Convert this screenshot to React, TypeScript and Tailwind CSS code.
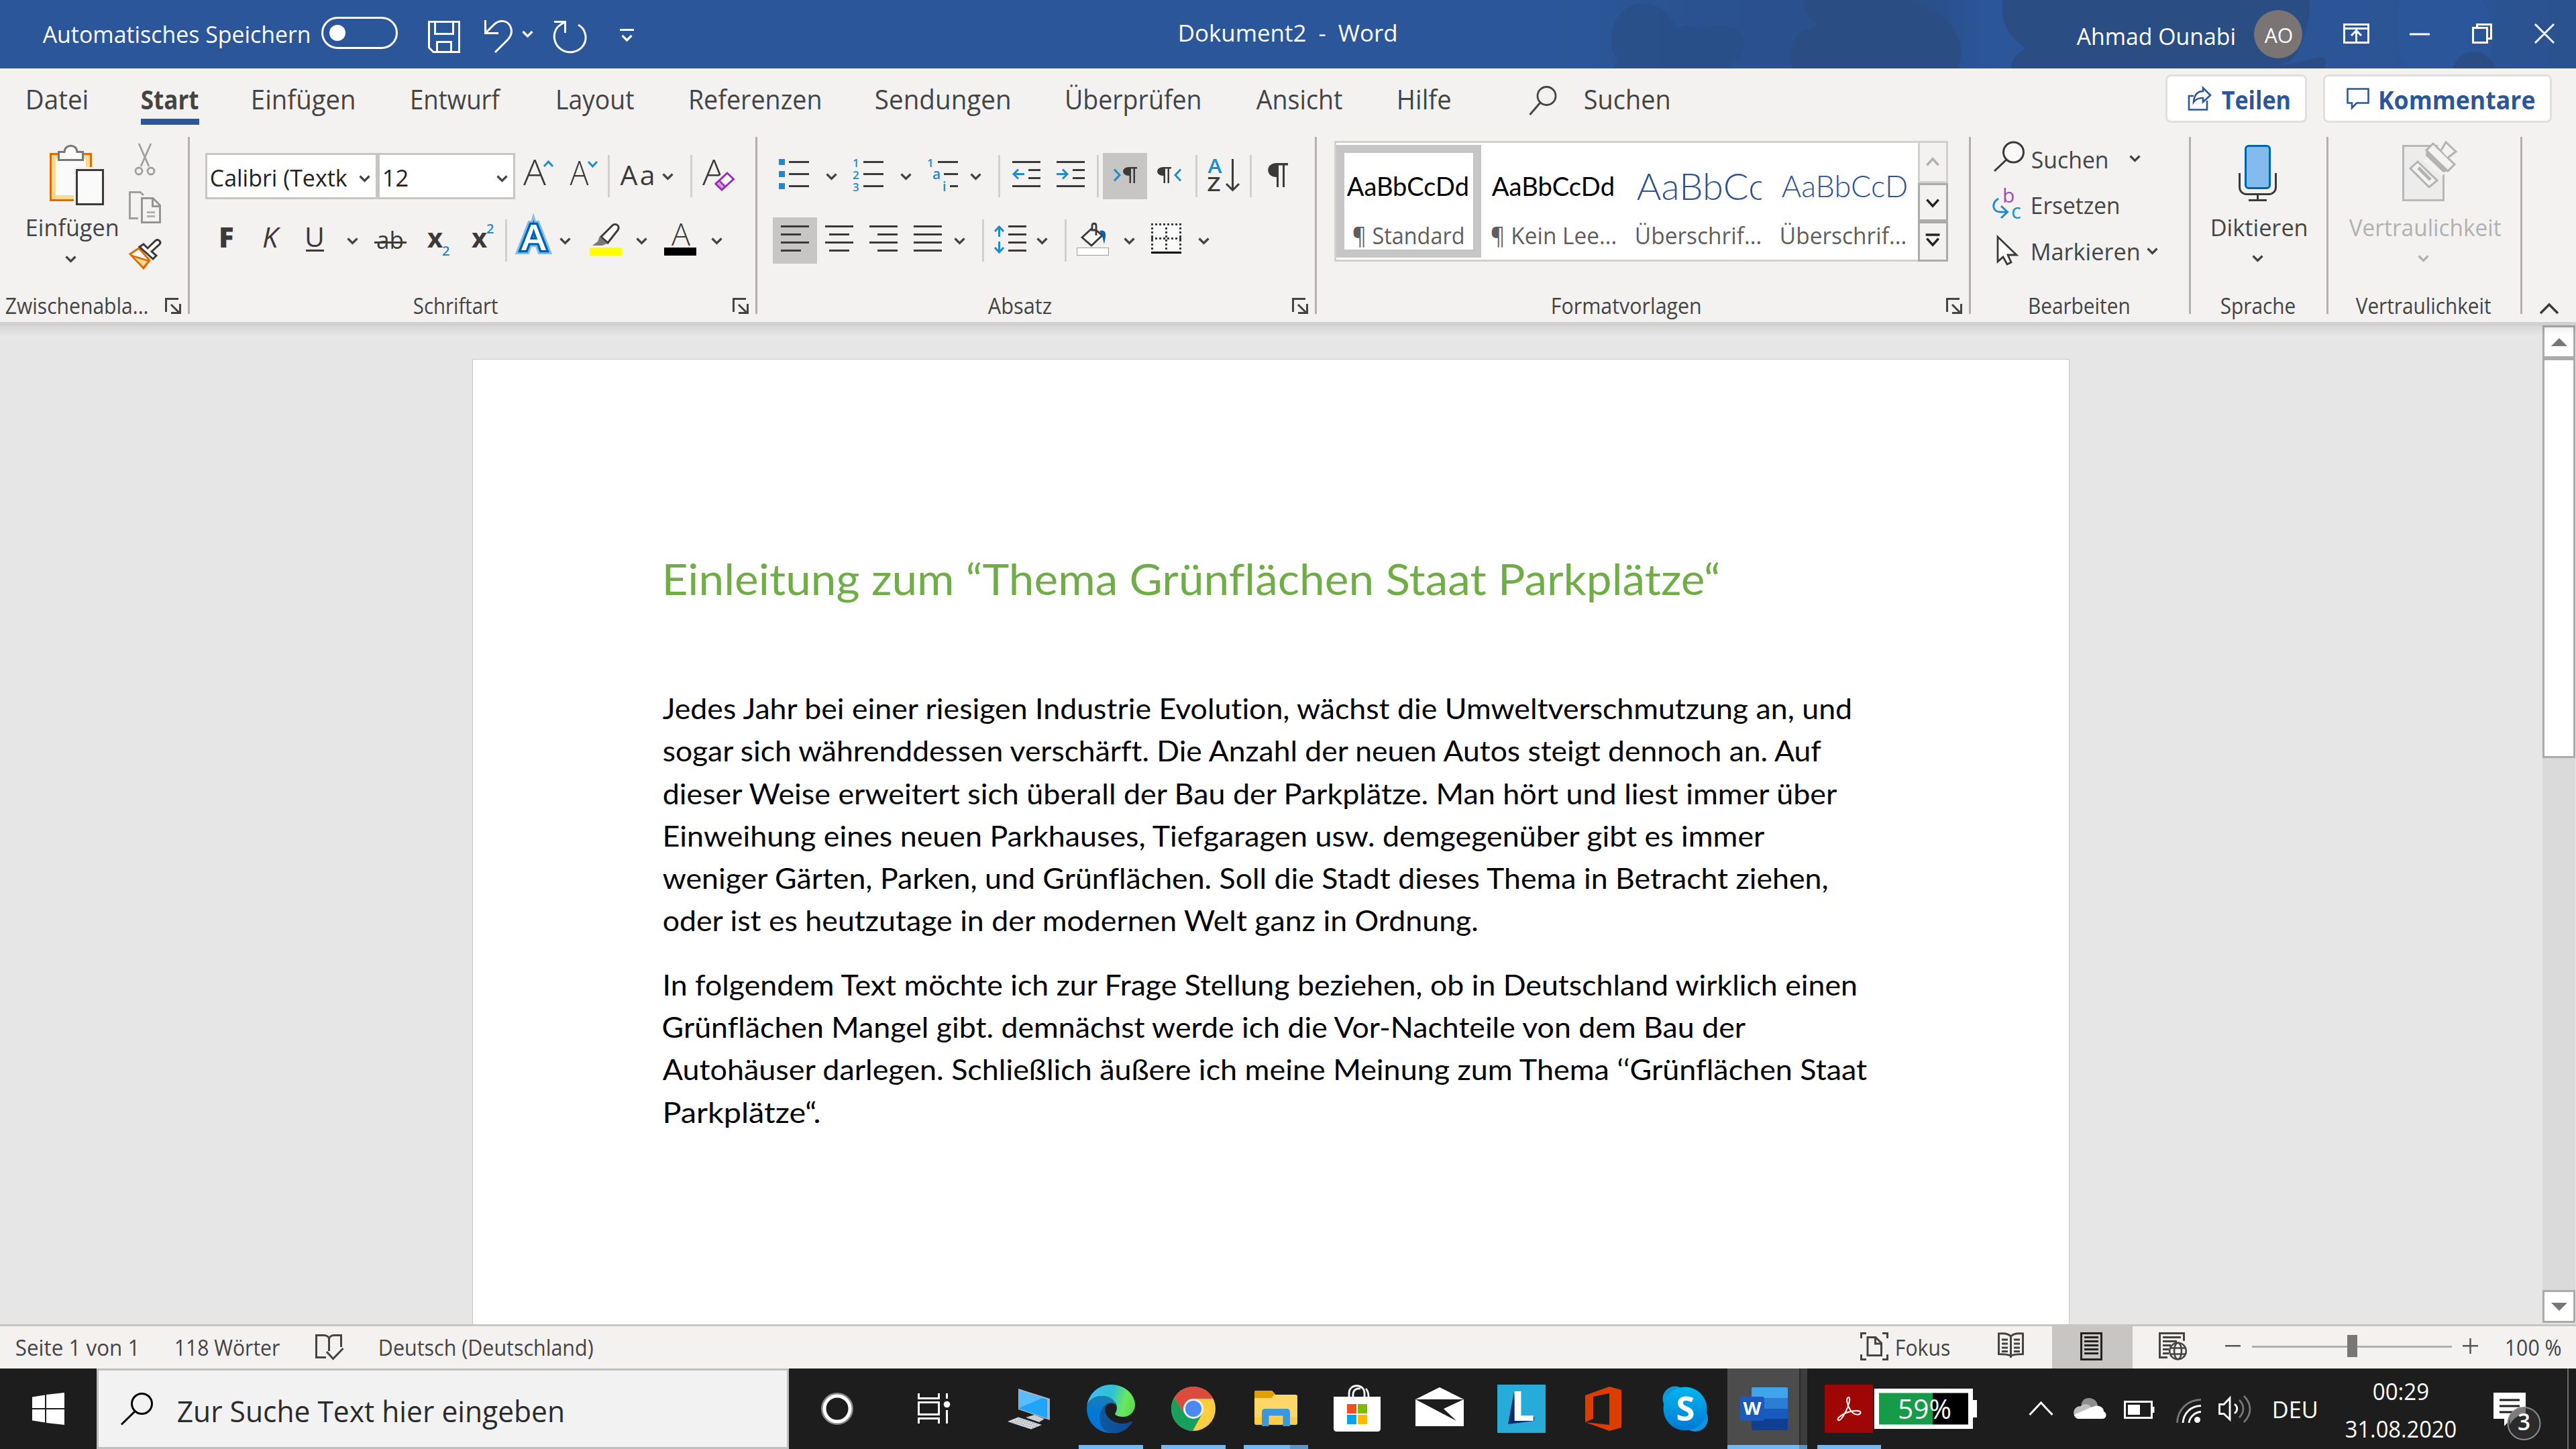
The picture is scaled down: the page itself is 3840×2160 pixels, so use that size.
import { useLayoutEffect, useRef, type ReactNode } from "react";

const INK = "#3b3a39";
const BLUE = "#1e8bcd";

/** Single line of text whose ink is condensed or widened to fill the width of its box. */
function Fit({ className = "", children }: { className?: string; children: string }) {
  const ref = useRef<HTMLSpanElement>(null);
  useLayoutEffect(() => {
    const el = ref.current;
    const box = el?.parentElement;
    const ctx = document.createElement("canvas").getContext("2d");
    if (!el || !box || !ctx) return;
    const cs = getComputedStyle(el);
    ctx.font = `${cs.fontStyle} ${cs.fontWeight} ${cs.fontSize} ${cs.fontFamily}`;
    // The same minimal tracking as the element, which keeps ligatures off in both.
    (ctx as CanvasRenderingContext2D & { letterSpacing: string }).letterSpacing = "0.01px";
    const m = ctx.measureText(children);
    const k = (box.clientWidth - 0.5) / (m.actualBoundingBoxLeft + m.actualBoundingBoxRight);
    el.style.transform = `translate(${m.actualBoundingBoxLeft * k + 0.7}px, 1px) scaleX(${k})`;
  }, [children]);
  return (
    <div className={`shrink-0 ${className}`}>
      <span ref={ref} className="block w-max origin-left tracking-[0.01px] whitespace-pre">
        {children}
      </span>
    </div>
  );
}

/** Icon canvas: draws the window region that starts at (x, y). */
function Ico({ x, y, w, h, children, className = "" }: { x: number; y: number; w: number; h: number; children?: ReactNode; className?: string }) {
  return (
    <svg className={`block shrink-0 ${className}`} width={w} height={h} viewBox={`${x} ${y} ${w} ${h}`} fill="none">
      {children}
    </svg>
  );
}

function V({ x, y, c = "#444", w = 3.2 }: { x: number; y: number; c?: string; w?: number }) {
  return <path d={`M${x + 1.5} ${y + 1.5}l7 7l7 -7`} stroke={c} strokeWidth={w} />;
}

function Lines({ rows, c = INK }: { rows: [number, number, number][]; c?: string }) {
  return (
    <>
      {rows.map(([a, b, y], i) => (
        <rect key={i} x={a} y={y} width={b - a} height={3} fill={c} />
      ))}
    </>
  );
}

function Launcher({ x }: { x: number }) {
  return (
    <Ico x={x} y={435} w={24} h={40}>
      <path d={`M${x + 1.5} 465V445.5H${x + 20}M${x + 9} 454l12 12M${x + 22.5} 453V466.5H${x + 9}`} stroke="#444" strokeWidth={3} />
    </Ico>
  );
}

const Sep = () => <div className="h-[264px] w-[3px] shrink-0 bg-[#b3b0ad]" />;
const Tick = () => <div className="mt-[27px] h-[63px] w-[3px] shrink-0 bg-[#d2d0ce]" />;
const Tick2 = () => <div className="mt-[15px] h-[63px] w-[3px] shrink-0 bg-[#d2d0ce]" />;

function TitleBar() {
  return (
    <header className="relative flex h-[102px] w-full shrink-0 items-start bg-[#2b579a] text-white">
      <div className="absolute inset-y-0 right-0">
        <Ico x={2300} y={0} w={1540} h={102}>
          <defs>
            <linearGradient id="tb" x1="0" x2="1" y1="0" y2="0">
              <stop offset="0" stopColor="#2a5391" stopOpacity="0" />
              <stop offset="0.15" stopColor="#2a5290" />
              <stop offset="0.38" stopColor="#2a508b" />
              <stop offset="0.43" stopColor="#2b569a" />
              <stop offset="0.8" stopColor="#2b5596" />
              <stop offset="1" stopColor="#2a528f" />
            </linearGradient>
          </defs>
          <rect x={2300} y={0} width={1540} height={102} fill="url(#tb)" />
          <g fill="#2a4e84">
            <path d="M2405 102C2408 96 2412 93 2412 90C2400 82 2398 40 2412 25C2425 5 2455 -3 2478 15C2494 28 2498 35 2500 42C2514 35 2525 38 2535 45C2560 33 2590 38 2598 55C2606 78 2590 90 2575 102Z" opacity=".7" />
            <path d="M2672 102C2664 60 2680 45 2710 38C2690 20 2686 8 2690 0H2850C2890 12 2915 40 2922 65C2926 80 2922 95 2918 102Z" />
            <path d="M2986 0H3443C3444 40 3430 75 3415 90L3390 102H2998C2996 92 3004 82 3020 72C2988 50 2982 25 2986 0Z" />
            <path d="M3370 102C3405 98 3440 90 3458 85C3470 84 3468 96 3464 102Z" />
            <path d="M3657 102C3660 85 3674 77 3688 77C3704 77 3716 88 3719 102Z" />
          </g>
          <path d="M3580 0C3565 40 3574 80 3590 102H3657C3662 84 3674 77 3688 77C3700 77 3706 82 3710 87C3720 60 3714 20 3700 0Z" fill="#2b579a" />
        </Ico>
      </div>
      <div className="relative flex">
        <Fit className="ml-[63px] w-[398px] text-[35px] leading-[100px]">Automatisches Speichern</Fit>
        <div className="mt-[25px] ml-[18px] flex h-[48px] w-[114px] items-center rounded-full border-3 border-white pl-[9px]">
          <div className="size-6 rounded-full bg-white" />
        </div>
        <Ico x={593} y={0} w={352} h={102}>
          <g stroke="#fff" strokeWidth={3}>
            <path d="M639.5 32.5H684.5V77.5H646L639.5 71ZM648.5 32.5V50.5H675.5V32.5M651.5 77.5V62.5H672.5V77.5" />
            <path d="M723.5 30V49.5H743M724 49L737 36C745 29 757 30 761 40C765 49 761 55 756 60L738 78" />
            <path d="M862 37C873 43 876 57 870 67C863 78 848 81 837 74C826 67 823 52 830 42C833 38 836 36 842 33M826 32.5H842.5V49" />
            <path d="M924 44.5H945" />
            <path d="M779.5 47l7 7l7 -7M927.5 53l7 7l7 -7" strokeWidth={3.2} />
          </g>
        </Ico>
        <Fit className="ml-[813px] w-[323px] text-[35px] leading-[95px]">{"Dokument2  -  Word"}</Fit>
        <Fit className="ml-[1014px] w-[236px] text-[35px] leading-[105px]">Ahmad Ounabi</Fit>
        <div className="mt-[15px] ml-[29px] flex size-[72px] rounded-full bg-[#7a7574]">
          <Fit className="ml-[15px] w-[42px] text-[31px] leading-[73px]">AO</Fit>
        </div>
        <Ico x={3432} y={0} w={408} h={102}>
          <path d="M3494.5 36.5H3530.5V63.5H3494.5ZM3494 42.5H3531M3512.5 63V46M3505 53l7.5 -7.5l7.5 7.5M3592 51H3622M3686.5 41.5H3707.5V63.5H3686.5ZM3692.5 41V36.5H3713.5V57.5H3708M3779 36l28 28M3807 36l-28 28" stroke="#fff" strokeWidth={3} />
        </Ico>
      </div>
    </header>
  );
}

function Tabs() {
  const t = "text-[40px] leading-[89px]";
  return (
    <nav className="flex h-[102px] shrink-0 items-start text-[#444]">
      <Fit className={`ml-[40px] w-[90px] ${t}`}>Datei</Fit>
      <div className="ml-[80px] w-[87px] shrink-0">
        <Fit className={`h-[75px] w-[86px] font-bold ${t}`}>Start</Fit>
        <div className="h-[9px] bg-[#2b579a]" />
      </div>
      <Fit className={`ml-[79px] w-[152px] ${t}`}>Einfügen</Fit>
      <Fit className={`ml-[85px] w-[134px] ${t}`}>Entwurf</Fit>
      <Fit className={`ml-[83px] w-[115px] ${t}`}>Layout</Fit>
      <Fit className={`ml-[83px] w-[195px] ${t}`}>Referenzen</Fit>
      <Fit className={`ml-[82px] w-[200px] ${t}`}>Sendungen</Fit>
      <Fit className={`ml-[84px] w-[200px] ${t}`}>Überprüfen</Fit>
      <Fit className={`ml-[83px] w-[129px] ${t}`}>Ansicht</Fit>
      <Fit className={`ml-[83px] w-[78px] ${t}`}>Hilfe</Fit>
      <Ico x={2162} y={102} w={200} h={102}>
        <circle cx={2305.5} cy={143} r={13.5} stroke="#444" strokeWidth={2.8} />
        <path d="M2296 153L2280.5 171" stroke="#444" strokeWidth={3} />
      </Ico>
      <Fit className={`w-[126px] ${t}`}>Suchen</Fit>
      <div className="mt-[9px] ml-[740px] flex h-[72px] w-[211px] shrink-0 rounded-lg border-3 border-[#e1dfdd] bg-white text-[#2b579a]">
        <Ico x={3231} y={114} w={80} h={66}>
          <path d="M3270 143H3263V163.5H3290V150M3270 152C3271 140 3277 136 3284 136V131L3295 142L3284 152V146C3277 146 3273 148 3270 152Z" stroke="#2b579a" strokeWidth={2.6} />
        </Ico>
        <Fit className="w-[102px] text-[38px] leading-[67px] font-bold">Teilen</Fit>
      </div>
      <div className="mt-[9px] ml-[24px] flex h-[72px] w-[341px] shrink-0 rounded-lg border-3 border-[#e1dfdd] bg-white text-[#2b579a]">
        <Ico x={3466} y={114} w={81} h={66}>
          <path d="M3499.5 132.5H3530.5V153.5H3513L3506 161V153.5H3499.5Z" stroke="#2b579a" strokeWidth={2.6} />
        </Ico>
        <Fit className="w-[231px] text-[38px] leading-[67px] font-bold">Kommentare</Fit>
      </div>
    </nav>
  );
}

function Clipboard() {
  return (
    <section className="w-[280px] shrink-0">
      <div className="flex h-[231px]">
        <div className="ml-[40px] w-[137px]">
          <Ico x={40} y={204} w={137} h={108}>
            <rect x={75.5} y={229.5} width={60} height={69} fill="#f8da90" stroke="#e06c00" strokeWidth={3} />
            <rect x={83} y={237} width={45} height={54} fill="#fafafa" />
            <path d="M87.5 226.5H96C97 214 114 214 115 226.5H123.5V238.5H87.5Z" fill="#fafafa" stroke="#797775" strokeWidth={3} />
            <rect x={110} y={249} width={50} height={60} fill="#f3f2f1" />
            <rect x={114.5} y={253.5} width={39} height={51} fill="#fafafa" stroke={INK} strokeWidth={3} />
          </Ico>
          <Fit className="h-[51px] w-[135px] text-[35px] leading-[51px]">Einfügen</Fit>
          <Ico x={40} y={363} w={135} h={40}>
            <V x={97} y={381} />
          </Ico>
        </div>
        <div className="ml-[9px]">
          <Ico x={186} y={204} w={60} h={69}>
            <g stroke="#a19f9d" strokeWidth={2.8}>
              <path d="M207 214L222 248M225 214L210 248" />
              <circle cx={207} cy={255} r={5} />
              <circle cx={225} cy={255} r={5} />
            </g>
          </Ico>
          <Ico x={186} y={273} w={60} h={72}>
            <path d="M206 325.5H193.5V286.5H209L214 291" stroke="#a19f9d" strokeWidth={3} />
            <path d="M211.5 295.5H228L238.5 306V331.5H211.5Z M227.5 296V307.5H238" stroke="#979593" strokeWidth={3} />
            <path d="M219 316.5h12M219 322.5h12" stroke="#b3b0ad" strokeWidth={3} />
          </Ico>
          <Ico x={186} y={345} w={60} h={80}>
            <path d="M207 370L194 378.5L214 400L223 388Z" fill="#fff" stroke="#e06c00" strokeWidth={3} />
            <path d="M196 381L222 389L213.5 399Z" fill="#f8da90" stroke="#e06c00" strokeWidth={2.5} />
            <path d="M208 368L214 364L220 370L232 358.5C236 356 241 360 238 364L226 375L233 381L228 386Z" fill="#fff" stroke={INK} strokeWidth={3} />
          </Ico>
        </div>
      </div>
      <div className="flex">
        <Fit className="ml-[8px] w-[212px] text-[32px] leading-[39px]">Zwischenabla...</Fit>
        <div className="w-[26px]" />
        <Launcher x={246} />
      </div>
    </section>
  );
}

function FontGroup() {
  return (
    <section className="w-[843px] shrink-0">
      <div className="flex h-[108px] items-start">
        <div className="mt-[24px] ml-[23px] flex h-[69px] w-[462px] shrink-0 border-3 border-[#c8c6c4] bg-white text-[#222]">
          <Fit className="ml-[5px] w-[204px] text-[35px] leading-[65px]">Calibri (Textk</Fit>
          <Ico x={518} y={231} w={42} h={63}>
            <V x={535} y={261} />
          </Ico>
          <div className="w-[6px] bg-[#c8c6c4]" />
          <Fit className="ml-[6px] w-[36px] text-[35px] leading-[65px]">12</Fit>
          <Ico x={608} y={231} w={157} h={63}>
            <V x={740} y={261} />
          </Ico>
        </div>
        <Ico x={768} y={204} w={138} h={108} className="font-['Open_Sans',sans-serif]">
          <g fill={INK}>
            <text x={780} y={276} fontSize={54} fontWeight={350} textLength={34} lengthAdjust="spacingAndGlyphs">A</text>
            <text x={849.5} y={276} fontSize={50} fontWeight={350} textLength={28} lengthAdjust="spacingAndGlyphs">A</text>
          </g>
          <path d="M811 248l6.5 -7l6.5 7M877 241l6.5 7l6.5 -7" stroke={BLUE} strokeWidth={3} />
        </Ico>
        <Tick />
        <Ico x={909} y={204} w={120} h={108} className="font-['Open_Sans',sans-serif]">
          <text x={924.5} y={276} fontSize={41} fill={INK} textLength={52} lengthAdjust="spacing">Aa</text>
          <V x={987} y={258} />
        </Ico>
        <Tick />
        <Ico x={1032} y={204} w={94} h={108} className="font-['Open_Sans',sans-serif]">
          <text x={1047} y={276} fontSize={54} fontWeight={350} fill={INK} textLength={34} lengthAdjust="spacingAndGlyphs">A</text>
          <path d="M1082 257L1095 269L1077 285L1064 273Z" fill="#f3f2f1" stroke="#f3f2f1" strokeWidth={5} />
          <path d="M1084 258L1093.5 267L1076 283L1067 274Z" fill="#fff" stroke="#9b2fae" strokeWidth={3} />
          <path d="M1067 274L1072 269L1081 278L1076 283Z" fill="#d59ddf" stroke="#9b2fae" strokeWidth={2.5} />
        </Ico>
      </div>
      <div className="flex h-[123px] items-start">
        <Ico x={283} y={312} w={470} h={123} className="font-['Open_Sans',sans-serif]">
          <g fill={INK}>
            <text x={326} y={369} fontSize={42} fontWeight={800}>F</text>
            <text x={391} y={369} fontSize={42} fontStyle="italic">K</text>
            <text x={454} y={368} fontSize={41}>U</text>
            <rect x={456} y={372} width={27} height={3} />
            <text x={561} y={371} fontSize={37} textLength={41} lengthAdjust="spacingAndGlyphs">ab</text>
            <rect x={558} y={360} width={48} height={3} />
            <text x={637} y={369} fontSize={40} fontWeight={700}>x</text>
            <text x={703} y={369} fontSize={40} fontWeight={700}>x</text>
          </g>
          <g fill={BLUE}>
            <text x={659} y={381} fontSize={20} fontWeight={600}>2</text>
            <text x={725} y={348} fontSize={20} fontWeight={600}>2</text>
          </g>
          <V x={517} y={354} />
        </Ico>
        <Tick2 />
        <Ico x={756} y={312} w={370} h={123} className="font-['Open_Sans',sans-serif]">
          <g fontSize={52} fontWeight={600}>
            <text x={777} y={373} stroke="#83bbec" strokeWidth={12} textLength={37} lengthAdjust="spacingAndGlyphs">A</text>
            <text x={777} y={373} stroke="#0063b1" strokeWidth={6.5} textLength={37} lengthAdjust="spacingAndGlyphs">A</text>
            <text x={777} y={373} fill="#fff" textLength={37} lengthAdjust="spacingAndGlyphs">A</text>
          </g>
          <V x={834} y={354} />
          <path d="M896 353L913 336C917 332 925 336 921 343L906 362L896 353Z" fill="#fafafa" stroke={INK} strokeWidth={3} />
          <path d="M894 352L905 363L898 366H883L891 360Z" fill="#797775" />
          <rect x={879} y={369} width={48} height={12} fill="#ff0" />
          <V x={948} y={354} />
          <text x={1001} y={366} fontSize={46} fontWeight={350} fill={INK} textLength={28} lengthAdjust="spacingAndGlyphs">A</text>
          <rect x={990} y={369} width={48} height={12} fill="#000" />
          <V x={1060} y={354} />
        </Ico>
      </div>
      <div className="flex">
        <Fit className="ml-[333px] w-[126px] text-[32px] leading-[39px]">Schriftart</Fit>
        <div className="w-[350px]" />
        <Launcher x={1092} />
      </div>
    </section>
  );
}

function Paragraph() {
  return (
    <section className="w-[831px] shrink-0">
      <div className="flex h-[108px] items-start">
        <Ico x={1129} y={204} w={359} h={108} className="font-['Open_Sans',sans-serif]">
          <path d="M1161 237h9v9h-9zM1161 255h9v9h-9zM1161 273h9v9h-9z" fill={BLUE} />
          <Lines rows={[[1176, 1206, 240], [1176, 1206, 258], [1176, 1206, 276], [1287, 1317, 240], [1287, 1317, 258], [1287, 1317, 276], [1398, 1428, 240], [1407, 1428, 258], [1416, 1428, 276]]} />
          <g fill={BLUE} fontWeight={600} fontSize={17}>
            <text x={1271} y={249}>1</text>
            <text x={1271} y={267}>2</text>
            <text x={1271} y={285}>3</text>
            <text x={1382} y={249}>1</text>
            <text x={1390} y={267} fontSize={21}>a</text>
            <text x={1405} y={285} fontSize={20}>i</text>
          </g>
          <V x={1231} y={258} />
          <V x={1342} y={258} />
          <V x={1446} y={258} />
        </Ico>
        <Tick />
        <Ico x={1491} y={204} w={144} h={108}>
          <Lines rows={[[1509, 1551, 240], [1533, 1551, 252], [1533, 1551, 264], [1509, 1551, 276], [1575, 1617, 240], [1599, 1617, 252], [1599, 1617, 264], [1575, 1617, 276]]} />
          <path d="M1527 259.5H1511M1518 252.5L1511 259.5L1518 266.5M1575 259.5H1591M1584 252.5L1591 259.5L1584 266.5" stroke={BLUE} strokeWidth={3} />
        </Ico>
        <Tick />
        <div className="mt-[24px] ml-[6px] h-[69px] w-[66px] bg-[#c8c6c4]">
          <Ico x={1644} y={228} w={66} h={69}>
            <path d="M1661 252.5L1669 261L1661 269.5" stroke={BLUE} strokeWidth={3} />
            <path d="M1695 249V251.5H1692V273H1689.5V251.5H1686V273H1683.5V262C1671 262 1671 249 1683.5 249Z" fill={INK} />
          </Ico>
        </div>
        <Ico x={1710} y={204} w={72} h={108}>
          <path d="M1760 252.5L1752 261L1760 269.5" stroke={BLUE} strokeWidth={3} />
          <path d="M1746 249V251.5H1743V273H1740.5V251.5H1737V273H1734.5V262C1722 262 1722 249 1734.5 249Z" fill={INK} />
        </Ico>
        <Tick />
        <Ico x={1785} y={204} w={78} h={108} className="font-['Open_Sans',sans-serif]">
          <text x={1800.5} y={258} fontSize={29} fill={BLUE} fontWeight={600} textLength={21} lengthAdjust="spacingAndGlyphs">A</text>
          <text x={1799.5} y={285} fontSize={29} fill={INK} fontWeight={600} textLength={20} lengthAdjust="spacingAndGlyphs">Z</text>
          <path d="M1837.5 237V283M1828 274L1837.5 283.5L1847 274" stroke={INK} strokeWidth={3} />
        </Ico>
        <Tick />
        <Ico x={1866} y={204} w={94} h={108}>
          <path d="M1920 243V246.5H1915V279H1912V246.5H1906V279H1903V264C1886 264 1886 243 1903 243Z" fill={INK} />
        </Ico>
      </div>
      <div className="flex h-[123px] items-start">
        <div className="mt-[12px] ml-[23px] h-[69px] w-[66px] shrink-0 bg-[#c8c6c4]">
          <Ico x={1152} y={324} w={66} h={69}>
            <Lines rows={[[1164, 1206, 336], [1164, 1194, 348], [1164, 1206, 360], [1164, 1194, 372]]} />
          </Ico>
        </div>
        <Ico x={1218} y={312} w={246} h={123}>
          <Lines
            rows={[
              [1230, 1272, 336], [1236, 1266, 348], [1230, 1272, 360], [1236, 1266, 372],
              [1296, 1338, 336], [1308, 1338, 348], [1296, 1338, 360], [1308, 1338, 372],
              [1362, 1404, 336], [1362, 1404, 348], [1362, 1404, 360], [1362, 1404, 372],
            ]}
          />
          <V x={1422} y={354} />
        </Ico>
        <Tick2 />
        <Ico x={1467} y={312} w={120} h={123}>
          <Lines rows={[[1503, 1530, 336], [1503, 1530, 348], [1503, 1530, 360], [1503, 1530, 372]]} />
          <path d="M1489.5 353V338M1483 345L1489.5 338L1496 345M1489.5 360V376M1483 369L1489.5 376L1496 369" stroke={BLUE} strokeWidth={3} />
          <V x={1545} y={354} />
        </Ico>
        <Tick2 />
        <Ico x={1590} y={312} w={370} h={123}>
          <path d="M1627 341L1613 354L1627 366L1643 351L1634 343V337C1634 332 1628 332 1628 337V343L1634 343V351" fill="#fafafa" stroke={INK} strokeWidth={2.8} />
          <path d="M1639 344C1646 342 1649 346 1648 353L1646 364L1643 352Z" fill="#0063b1" />
          <rect x={1605.5} y={369.5} width={47} height={11} fill="#fff" stroke="#a19f9d" />
          <V x={1675} y={354} />
          <rect x={1717} y={334} width={43} height={43} fill="#fafafa" />
          <path d="M1716 334.5H1761M1716 355.5H1761" stroke={INK} strokeWidth={3} strokeDasharray="3 3" />
          <path d="M1717.5 333V372M1738.5 339V372M1759.5 333V372" stroke={INK} strokeWidth={3} strokeDasharray="3 3" />
          <rect x={1716} y={375} width={45} height={3} fill="#000" />
          <V x={1786} y={354} />
        </Ico>
      </div>
      <div className="flex">
        <Fit className="ml-[343px] w-[95px] text-[32px] leading-[39px]">Absatz</Fit>
        <div className="w-[359px]" />
        <Launcher x={1926} />
      </div>
    </section>
  );
}

function Styles() {
  const label = "w-[185px] ml-[15px] text-[35px] leading-[51px] text-[#605e5c] h-[60px]";
  return (
    <section className="w-[972px] shrink-0">
      <div className="h-[231px] pt-[6px]">
        <div className="ml-[26px] flex h-[180px] w-[915px] bg-white">
          <div className="flex h-[180px] w-[870px] border-y-3 border-l-3 border-[#d2d0ce] py-[3px]">
            <div className="w-[216px] shrink-0 shadow-[inset_0_0_0_12px_#c6c6c6]">
              <Fit className="ml-[15px] h-[108px] w-[181px] font-['Lato'] text-[39px] leading-[120px] text-black">AaBbCcDd</Fit>
              <Fit className="ml-[25px] w-[164px] text-[35px] leading-[51px] text-[#605e5c]">¶ Standard</Fit>
            </div>
            <div className="w-[216px] shrink-0">
              <Fit className="ml-[15px] h-[108px] w-[182px] font-['Lato'] text-[39px] leading-[120px] text-black">AaBbCcDd</Fit>
              <Fit className={label}>¶ Kein Lee...</Fit>
            </div>
            <div className="w-[216px] shrink-0">
              <div className="ml-[15px] w-[187px] overflow-hidden">
                <Fit className="h-[108px] w-[192px] font-['Lato'] text-[56px] leading-[119px] font-light text-[#2f5496]">AaBbCc</Fit>
              </div>
              <Fit className={label}>Überschrif...</Fit>
            </div>
            <div className="w-[216px] shrink-0">
              <Fit className="ml-[15px] h-[108px] w-[187px] font-['Lato'] text-[46px] leading-[119px] font-light text-[#2f5496]">AaBbCcD</Fit>
              <Fit className={label}>Überschrif...</Fit>
            </div>
          </div>
          <div className="flex w-[45px] flex-col bg-[#f3f2f1]">
            <Ico x={2859} y={210} w={45} h={63} className="border-3 border-[#d2d0ce]">
              <path d="M2871 247L2881 236L2891 247" stroke="#b3b0ad" strokeWidth={4} />
            </Ico>
            <Ico x={2859} y={273} w={45} h={57} className="border-3 border-[#ababab]">
              <path d="M2871 297L2881 308L2891 297" stroke="#222" strokeWidth={4} />
            </Ico>
            <Ico x={2859} y={330} w={45} h={60} className="border-3 border-[#ababab]">
              <path d="M2869 348.5H2893M2871 355L2881 366L2891 355" stroke="#222" strokeWidth={4} />
            </Ico>
          </div>
        </div>
      </div>
      <div className="flex">
        <Fit className="ml-[351px] w-[221px] text-[32px] leading-[39px]">Formatvorlagen</Fit>
        <div className="w-[366px]" />
        <Launcher x={2901} />
      </div>
    </section>
  );
}

function Editing() {
  return (
    <section className="w-[325px] shrink-0">
      <div className="h-[231px]">
        <div className="flex h-[72px]">
          <Ico x={2938} y={204} w={90} h={72}>
            <circle cx={3001.5} cy={227} r={15} fill="#fafafa" stroke={INK} strokeWidth={3} />
            <path d="M2991 238L2973 255" stroke={INK} strokeWidth={3} />
          </Ico>
          <Fit className="w-[113px] text-[35px] leading-[65px]">Suchen</Fit>
          <Ico x={3141} y={204} w={90} h={72}>
            <V x={3174} y={231} />
          </Ico>
        </div>
        <div className="flex h-[69px]">
          <Ico x={2938} y={276} w={91} h={69} className="font-['Open_Sans',sans-serif]">
            <text x={2985} y={302} fontSize={30} fill="#a846b9">b</text>
            <text x={2998} y={326} fontSize={31} fill={BLUE}>c</text>
            <path d="M2979 296C2968 303 2970 316 2982 316H2992M2983 307L2992.5 316L2983 325" stroke={BLUE} strokeWidth={3} />
          </Ico>
          <Fit className="w-[129px] text-[35px] leading-[58px]">Ersetzen</Fit>
        </div>
        <div className="flex h-[69px]">
          <Ico x={2938} y={345} w={91} h={69}>
            <path d="M2978 353V390L2986 383L2992 394L2998 391L2993 380H3006Z" fill="#fff" stroke={INK} strokeWidth={2.8} />
          </Ico>
          <Fit className="w-[159px] text-[35px] leading-[58px]">Markieren</Fit>
          <Ico x={3188} y={345} w={60} h={69}>
            <V x={3200} y={369} />
          </Ico>
        </div>
      </div>
      <Fit className="ml-[87px] w-[149px] text-[32px] leading-[39px]">Bearbeiten</Fit>
    </section>
  );
}

function Dictate() {
  return (
    <section className="w-[202px] shrink-0">
      <div className="h-[231px]">
        <Ico x={3266} y={204} w={202} h={108}>
          <rect x={3347.5} y={217.5} width={36} height={63} rx={4.5} fill="#83bbec" stroke="#0063b1" strokeWidth={3} />
          <path d="M3338.5 258V279C3338.5 285 3343 289.5 3349 289.5H3382C3388 289.5 3392.5 285 3392.5 279V258M3365.5 290V298M3352 298.5H3379" stroke={INK} strokeWidth={3} />
        </Ico>
        <Fit className="ml-[31px] h-[51px] w-[141px] text-[35px] leading-[51px]">Diktieren</Fit>
        <Ico x={3266} y={363} w={202} h={40}>
          <V x={3357} y={380} />
        </Ico>
      </div>
      <Fit className="ml-[44px] w-[111px] text-[32px] leading-[39px]">Sprache</Fit>
    </section>
  );
}

function Sensitivity() {
  return (
    <section className="w-[286px] shrink-0">
      <div className="h-[231px]">
        <Ico x={3471} y={204} w={286} h={108}>
          <rect x={3582.5} y={217.5} width={60} height={81} fill="#ececec" stroke="#b8b8b8" strokeWidth={3} />
          <path d="M3645 206L3612 240L3640 262L3668 240Z" fill="#f3f2f1" />
          <path d="M3604 241L3633 269L3621 279L3593 251Z" fill="#f3f2f1" stroke="#b3b3b3" strokeWidth={3} />
          <path d="M3605 250L3623 268" stroke="#b3b3b3" strokeWidth={5} />
          <path d="M3627 214L3659 245L3649 255L3617 224Z" fill="#f3f2f1" stroke="#b3b3b3" strokeWidth={3} />
          <path d="M3617 224L3622 229L3649 255L3642 257L3616 232Z" fill="#b3b3b3" />
          <path d="M3639 224L3646 212L3661 226L3649 235" fill="#f3f2f1" stroke="#b3b3b3" strokeWidth={3} />
        </Ico>
        <Fit className="ml-[30px] h-[51px] w-[227px] text-[35px] leading-[51px] text-[#b1b1b1]">Vertraulichkeit</Fit>
        <Ico x={3471} y={363} w={286} h={40}>
          <V x={3604} y={380} c="#b1b1b1" />
        </Ico>
      </div>
      <Fit className="ml-[40px] w-[202px] text-[32px] leading-[39px]">Vertraulichkeit</Fit>
    </section>
  );
}

function Page() {
  const l = "text-[42.5px] leading-[63.3px]";
  return (
    <div className="relative flex h-[1494px] shrink-0 overflow-hidden bg-[#e6e6e6]">
      <article className="mt-[55px] ml-[704px] h-[1500px] w-[2381px] shrink-0 border border-[#c6c6c6] bg-white pt-[300px] pl-[282px] font-['Lato'] text-black">
        <Fit className="ml-[4px] h-[52px] w-[1571px] text-[64px] leading-[52px] text-[#70ad47]">{"Einleitung zum “Thema Grünflächen Staat Parkplätze“"}</Fit>
        <div className="mt-[135px]">
          <Fit className={`w-[1775px] ${l}`}>Jedes Jahr bei einer riesigen Industrie Evolution, wächst die Umweltverschmutzung an, und</Fit>
          <Fit className={`ml-[1px] w-[1735px] ${l}`}>sogar sich währenddessen verschärft. Die Anzahl der neuen Autos steigt dennoch an. Auf</Fit>
          <Fit className={`ml-[1px] w-[1755px] ${l}`}>dieser Weise erweitert sich überall der Bau der Parkplätze. Man hört und liest immer über</Fit>
          <Fit className={`ml-[3px] w-[1643px] ${l}`}>Einweihung eines neuen Parkhauses, Tiefgaragen usw. demgegenüber gibt es immer</Fit>
          <Fit className={`w-[1739px] ${l}`}>weniger Gärten, Parken, und Grünflächen. Soll die Stadt dieses Thema in Betracht ziehen,</Fit>
          <Fit className={`ml-[1px] w-[1216px] ${l}`}>oder ist es heutzutage in der modernen Welt ganz in Ordnung.</Fit>
        </div>
        <div className="mt-[32px]">
          <Fit className={`ml-[3px] w-[1779px] ${l}`}>In folgendem Text möchte ich zur Frage Stellung beziehen, ob in Deutschland wirklich einen</Fit>
          <Fit className={`ml-[1px] w-[1618px] ${l}`}>Grünflächen Mangel gibt. demnächst werde ich die Vor-Nachteile von dem Bau der</Fit>
          <Fit className={`w-[1798px] ${l}`}>Autohäuser darlegen. Schließlich äußere ich meine Meinung zum Thema ‘‘Grünflächen Staat</Fit>
          <Fit className={`ml-[3px] w-[231px] ${l}`}>Parkplätze“.</Fit>
        </div>
      </article>
      <div className="mt-[5px] ml-[705px] flex h-[1487px] w-[49px] shrink-0 flex-col bg-[#dadada]">
        <div className="flex h-[49px] items-center justify-center border-3 border-[#ababab] bg-white">
          <div className="border-x-12 border-b-12 border-x-transparent border-b-[#777]" />
        </div>
        <div className="h-[596px] border-3 border-[#ababab] bg-white" />
        <div className="grow" />
        <div className="flex h-[49px] items-center justify-center border-3 border-[#ababab] bg-white">
          <div className="border-x-12 border-t-12 border-x-transparent border-t-[#777]" />
        </div>
      </div>
      <div className="absolute inset-x-0 top-0 h-[20px] bg-linear-to-b from-black/10 to-black/0" />
      <div className="absolute inset-x-0 top-0 h-[5px] bg-[#d0d0d0]" />
    </div>
  );
}

function StatusBar() {
  const t = "text-[32px] leading-[61px]";
  const doc = (x: number) => [0, 1, 2, 3, 4].map((i) => [x, x + 21, 1992 + i * 6] as [number, number, number]);
  return (
    <footer className="flex h-[66px] shrink-0 items-start border-t-3 border-[#c8c6c4] bg-[#f3f2f1] text-[#444]">
      <Fit className={`ml-[23px] w-[179px] ${t}`}>Seite 1 von 1</Fit>
      <Fit className={`ml-[59px] w-[156px] ${t}`}>118 Wörter</Fit>
      <Ico x={417} y={1977} w={149} h={63}>
        <path d="M486 2023.5H471.5V1990.5H483C487 1990.5 490.5 1993 490.5 1996C490.5 1993 494 1990.5 498 1990.5H508.5V2008M490.5 1995V2014M487 2015L496.5 2025.5L511.5 2010" stroke="#444" strokeWidth={3} />
      </Ico>
      <Fit className={`w-[318px] ${t}`}>Deutsch (Deutschland)</Fit>
      <Ico x={2765} y={1977} w={62} h={63} className="ml-[1881px]">
        <path d="M2774.5 1995V1987.5H2782M2806 1987.5H2813.5V1995M2813.5 2019V2026.5H2806M2782 2026.5H2774.5V2019M2784 1993.5H2796L2804.5 2002V2020.5H2784ZM2795.5 1994V2003H2804" stroke="#444" strokeWidth={3} />
      </Ico>
      <Fit className={`w-[79px] ${t}`}>Fokus</Fit>
      <Ico x={2906} y={1977} w={153} h={63}>
        <path d="M2997.5 2021C2992 2018.5 2986 2018.5 2979.5 2018.5V1988C2988 1987 2994 1988 2997.5 1992C3001 1988 3007 1987 3015.5 1988V2018.5C3009 2018.5 3003 2018.5 2997.5 2021ZM2997.5 1992V2024" stroke="#444" strokeWidth={3} />
        <path d="M2984 1997H2993M2984 2003H2993M2984 2009H2993M3002 1997H3011M3002 2003H3011M3002 2009H3011M2984 2014.5H2993M3002 2014.5H3011" stroke="#444" strokeWidth={2.8} />
      </Ico>
      <div className="h-[63px] w-[120px] shrink-0 bg-[#c8c6c4]">
        <Ico x={3059} y={1977} w={120} h={63}>
          <rect x={3102.5} y={1987.5} width={30} height={39} stroke="#222" strokeWidth={3} />
          <Lines rows={doc(3107)} c="#222" />
        </Ico>
      </div>
      <Ico x={3179} y={1977} w={556} h={63}>
        <path d="M3231 2023.5H3219.5V1987.5H3255.5V1999" stroke="#444" strokeWidth={3} />
        <Lines rows={[[3224, 3251, 1992], [3224, 3245, 1998], [3224, 3236, 2004], [3224, 3233, 2010], [3224, 3233, 2016]]} c="#444" />
        <g stroke="#444" strokeWidth={2.6}>
          <circle cx={3246.5} cy={2014} r={12.3} />
          <ellipse cx={3246.5} cy={2014} rx={5.5} ry={12.3} />
          <path d="M3235 2009.5H3258M3235 2018.5H3258" />
        </g>
        <rect x={3317} y={2005} width={23} height={2.5} fill="#555" />
        <rect x={3357} y={2006} width={298} height={3} fill="#b1afad" />
        <rect x={3499} y={1990} width={15} height={33} fill="#797775" />
        <path d="M3671 2006.3H3694M3682.5 1995V2018" stroke="#555" strokeWidth={2.5} />
      </Ico>
      <Fit className={`w-[82px] ${t}`}>100 %</Fit>
    </footer>
  );
}

function TaskIcons() {
  return (
    <>
      <Ico x={1176} y={2040} w={300} h={120}>
        <circle cx={1248} cy={2100} r={22.5} stroke="#8a8a8a" strokeWidth={3} />
        <circle cx={1248} cy={2100} r={19} stroke="#fff" strokeWidth={5} />
        <path d="M1369.5 2077V2084.5H1399.5V2077M1369.5 2122V2114.5H1399.5V2122M1369.5 2090.5H1399.5V2108.5H1369.5ZM1411.5 2077V2085M1411.5 2102V2122" stroke="#fff" strokeWidth={3} />
        <circle cx={1411.5} cy={2093.5} r={4.8} fill="#fff" />
      </Ico>
      <Ico x={1476} y={2040} w={132} h={120}>
        <path d="M1518 2070L1565 2085V2117L1518 2101Z" fill="#aab4bb" />
        <path d="M1519 2073L1561 2086V2114L1519 2100Z" fill="#1fa5fb" />
        <path d="M1519 2073L1554 2084L1519 2099Z" fill="#58bcff" />
        <path d="M1529 2113L1542 2109L1557 2115L1549 2120Z" fill="#c9d1d6" />
        <path d="M1502 2119L1518 2112.5L1553 2124L1537 2130.5Z" fill="#d6dce0" />
        <path d="M1508 2119L1540 2128M1513 2117L1545 2126M1518 2115L1548 2124" stroke="#9aa4aa" strokeWidth={1.5} strokeDasharray="2 1.5" />
      </Ico>
      <Ico x={1608} y={2040} w={111} h={120}>
        <defs>
          <linearGradient id="e1" x1="0" y1="0.3" x2="1" y2="0.5">
            <stop offset="0" stopColor="#3fbcff" />
            <stop offset="0.5" stopColor="#2bc3d2" />
            <stop offset="0.8" stopColor="#6be85f" />
            <stop offset="1" stopColor="#5ddc4c" />
          </linearGradient>
          <linearGradient id="e2" x1="0.5" y1="0" x2="0.4" y2="1">
            <stop offset="0" stopColor="#1b7fb4" />
            <stop offset="0.5" stopColor="#0078d7" />
            <stop offset="1" stopColor="#0a6fd0" />
          </linearGradient>
          <linearGradient id="e3" x1="0" y1="0" x2="1" y2="0">
            <stop offset="0" stopColor="#0c59a4" />
            <stop offset="1" stopColor="#114a8b" />
          </linearGradient>
        </defs>
        <g transform="translate(1620 2064) scale(.28125)">
          <path d="M0 126C4 50 62 0 128 0C178 0 224 24 245 65C252 80 257 95 256 110C254 145 226 170 195 170.5C180 171 160 168 152 160C147 154 152 150 155 144C162 132 161 114 153 99C140 76 112 60 80 60C36 60 0 90 0 126Z" fill="url(#e1)" />
          <path d="M0 126C2 88 38 60 80 60C125 60 150 84 157 112C148 98 136 98 128 98C100 98 72 130 69 170C67 205 84 233 106 246C125 256 145 259 169 250C150 257 138 256 128 256C58 256 0 200 0 126Z" fill="url(#e2)" />
          <path d="M117 102C100 110 96 125 97 138C104 178 145 206.5 189 206.5C208 206.5 222 202 235.7 195.5C240 193 243 198 241 201C222 229 200 245 174 254C150 261 125 257 106 246C84 233 68 205 68 172C69 140 85 112 117 102Z" fill="url(#e3)" />
        </g>
        <rect x={1608} y={2154} width={96} height={6} fill="#76b9ed" />
      </Ico>
      <Ico x={1719} y={2040} w={123} h={120}>
        <g transform="translate(1779 2100)">
          <circle r={33} fill="#ffcd40" />
          <path d="M0 -15H29.5A33 33 0 0 0 -28.6 -16.5L-13 7.5Z" fill="#db4c3f" />
          <path d="M-28.6 -16.5A33 33 0 0 0 -1 33L13 7.5H-13Z" fill="#17a05d" />
          <circle r={15} fill="#f1f1f1" />
          <circle r={12} fill="#4b89f5" />
        </g>
        <rect x={1731} y={2154} width={96} height={6} fill="#76b9ed" />
      </Ico>
      <Ico x={1842} y={2040} w={126} h={120}>
        <path d="M1870 2075C1870 2074 1871 2073 1872 2073H1896L1901 2079H1931C1933 2079 1934 2080 1934 2081V2121C1934 2123 1933 2124 1931 2124H1873C1871 2124 1870 2123 1870 2121Z" fill="#ffd768" />
        <path d="M1870 2075C1870 2074 1871 2073 1872 2073H1896L1901 2078L1895 2084H1870Z" fill="#e0a100" />
        <path d="M1870 2112H1934V2121C1934 2123 1933 2124 1931 2124H1873C1871 2124 1870 2123 1870 2121Z" fill="#fdc62f" opacity=".6" />
        <path d="M1881 2126V2105C1881 2102 1883 2100 1886 2100H1918C1921 2100 1923 2102 1923 2105V2126H1912.5V2110.5H1891.5V2126Z" fill="#3b97de" />
        <rect x={1854} y={2154} width={69} height={6} fill="#76b9ed" />
        <rect x={1923} y={2154} width={27} height={6} fill="#6095bf" />
      </Ico>
      <Ico x={1968} y={2040} w={118} h={120}>
        <path d="M2011 2082V2077C2011 2062 2034 2062 2034 2077V2082M2017 2082C2016 2072 2022 2069 2028 2070M2036 2070C2040 2074 2040 2078 2040 2082" stroke="#fff" strokeWidth={2.8} />
        <path d="M1988 2082H2058V2130C2058 2132 2056 2134 2054 2134H1992C1990 2134 1988 2132 1988 2130Z" fill="#fff" />
        <path d="M2008 2093h14v14h-14z" fill="#f25022" />
        <path d="M2024 2093h14v14h-14z" fill="#7fba00" />
        <path d="M2008 2109h14v14h-14z" fill="#00a4ef" />
        <path d="M2024 2109h14v14h-14z" fill="#ffb900" />
      </Ico>
      <Ico x={2086} y={2040} w={120} h={120}>
        <path d="M2110 2086L2146 2068L2182 2086V2126H2110Z" fill="#fff" />
        <path d="M2110 2086H2182L2152 2100L2171 2118Z" fill="#1d1d1d" />
      </Ico>
      <Ico x={2206} y={2040} w={122} h={120} className="font-['Open_Sans',sans-serif]">
        <rect x={2232} y={2064} width={72} height={72} fill="#27acd9" />
        <path d="M2257 2075L2248 2123L2287 2118V2112H2260Z" fill="#072a6c" />
        <text x={2252} y={2118} fontSize={61} fontWeight={700} fill="#fff" textLength={36} lengthAdjust="spacingAndGlyphs">L</text>
      </Ico>
      <Ico x={2328} y={2040} w={122} h={120}>
        <path d="M2363 2080L2399 2067L2417 2072V2128L2399 2133L2363 2120L2399 2124V2077L2375 2082V2115L2363 2120Z" fill="#dc3e02" />
      </Ico>
      <Ico x={2450} y={2040} w={125} h={120} className="font-['Open_Sans',sans-serif]">
        <defs>
          <linearGradient id="sk" x1="0" y1="0" x2="0" y2="1">
            <stop offset="0" stopColor="#00b7f0" />
            <stop offset="1" stopColor="#0078d4" />
          </linearGradient>
        </defs>
        <circle cx={2497} cy={2085} r={18.5} fill="#0f98d8" />
        <circle cx={2527} cy={2115} r={19} fill="#1393dc" />
        <circle cx={2512} cy={2100} r={32.5} fill="url(#sk)" />
        <text x={2498.5} y={2118} fontSize={51} fontWeight={700} fill="#fff" textLength={28} lengthAdjust="spacingAndGlyphs">S</text>
      </Ico>
      <Ico x={2575} y={2040} w={119} h={120} className="font-['Open_Sans',sans-serif]">
        <rect x={2575} y={2040} width={107} height={114} fill="#4c4c4c" />
        <rect x={2682} y={2040} width={12} height={114} fill="#3c3c3c" />
        <rect x={2682} y={2040} width={2} height={114} fill="#2a2a2a" />
        <rect x={2575} y={2154} width={107} height={6} fill="#76b9ed" />
        <rect x={2682} y={2154} width={12} height={6} fill="#6095bf" />
        <rect x={2611} y={2068} width={54} height={16.5} rx={2} fill="#41a5ee" />
        <rect x={2611} y={2084} width={54} height={16} fill="#2b7cd3" />
        <rect x={2611} y={2100} width={54} height={16} fill="#185abd" />
        <path d="M2611 2115H2665V2130C2665 2131 2664 2132 2663 2132H2613C2612 2132 2611 2131 2611 2130Z" fill="#103f91" />
        <rect x={2594} y={2082} width={36} height={36} rx={3} fill="#1c59be" />
        <text x={2598.5} y={2109} fontSize={27} fontWeight={700} fill="#fff" textLength={27} lengthAdjust="spacingAndGlyphs">W</text>
      </Ico>
      <Ico x={2694} y={2040} w={300} h={120} className="font-['Open_Sans',sans-serif]">
        <rect x={2720} y={2064} width={72} height={72} fill="#a00606" />
        <path d="M2756 2083C2751 2083 2753 2094 2759 2103C2765 2111 2773 2109 2773.5 2106C2774 2102 2763 2102 2752 2106C2743 2110 2738 2115 2740 2117C2743 2119 2748 2111 2752 2103C2756 2095 2759 2084 2756 2083Z" stroke="#fff" strokeWidth={2} />
        <rect x={2709} y={2154} width={95} height={6} fill="#76b9ed" />
        <rect x={2794} y={2070} width={147} height={60} fill="#fff" />
        <rect x={2940} y={2087} width={7} height={26} fill="#fff" />
        <rect x={2801} y={2076.5} width={80} height={47} fill="#169b48" />
        <rect x={2881} y={2076.5} width={53} height={47} fill="#000" />
        <text x={2829} y={2115} fontSize={41} fill="#fff" textLength={80} lengthAdjust="spacingAndGlyphs">59%</text>
      </Ico>
      <Ico x={2994} y={2040} w={395} h={120}>
        <path d="M3025.5 2109L3042.5 2091L3059.5 2109" stroke="#fff" strokeWidth={3} />
        <path d="M3103 2098C3101 2088 3108 2084 3114 2084C3121 2084 3127 2089 3127 2096Z" fill="#8e8e8e" />
        <path d="M3100 2115C3088 2115 3088 2096 3102 2096C3106 2091 3114 2092 3119 2099Z" fill="#c0c0c0" />
        <path d="M3098 2115C3094 2114 3092 2111 3092 2109L3119 2097C3128 2093 3136 2097 3136 2104C3142 2107 3140 2115 3134 2115Z" fill="#fff" />
        <rect x={3167.5} y={2089.5} width={40} height={24} stroke="#fff" strokeWidth={3} />
        <rect x={3172} y={2094} width={18} height={15} fill="#fff" />
        <rect x={3208.5} y={2097} width={3} height={9} fill="#fff" />
        <path d="M3245.5 2121C3246 2101 3261 2087 3281 2086.5" stroke="#777" strokeWidth={2.8} />
        <path d="M3254 2121C3255 2107 3265 2096 3281 2095.5M3263 2121C3264 2113 3271 2105 3281 2104.5" stroke="#fff" strokeWidth={2.8} />
        <circle cx={3275.5} cy={2116.5} r={4.5} fill="#fff" />
        <path d="M3308.5 2093.5H3315L3324 2084V2116L3315 2107.5H3308.5Z" stroke="#fff" strokeWidth={2.8} />
        <path d="M3331 2093C3336 2097 3336 2103 3331 2107" stroke="#fff" strokeWidth={2.8} />
        <path d="M3338 2087C3346 2095 3346 2105 3338 2113M3345 2081C3357 2093 3357 2108 3345 2120" stroke="#777" strokeWidth={2.8} />
      </Ico>
    </>
  );
}

function Taskbar() {
  return (
    <div className="flex h-[120px] shrink-0 items-start bg-[#1d1d1d] text-white">
      <Ico x={0} y={2040} w={144} h={120}>
        <path d="M48 2082.5L67 2079.5V2099H48ZM69 2079L96 2076V2099H69ZM48 2101H67V2120.5L48 2117.5ZM69 2101H96V2124L69 2121Z" fill="#fff" />
      </Ico>
      <div className="flex h-[120px] w-[1032px] shrink-0 border-3 border-[#bfbfbf] bg-[#f2f2f2] text-[#2b2b2b]">
        <Ico x={147} y={2043} w={117} h={114}>
          <circle cx={211.5} cy={2092.5} r={15} stroke="#000" strokeWidth={3} />
          <path d="M201 2104L181 2123.5" stroke="#000" strokeWidth={3} />
        </Ico>
        <Fit className="w-[575px] text-[44px] leading-[118px]">Zur Suche Text hier eingeben</Fit>
      </div>
      <TaskIcons />
      <Fit className="w-[64px] text-[35px] leading-[120px]">DEU</Fit>
      <div className="ml-[43px] w-[165px] shrink-0">
        <Fit className="ml-[41px] h-[60px] w-[83px] text-[35px] leading-[66px]">00:29</Fit>
        <Fit className="w-[165px] text-[35px] leading-[57px]">31.08.2020</Fit>
      </div>
      <Ico x={3661} y={2040} w={179} h={120} className="font-['Open_Sans',sans-serif]">
        <path d="M3717 2076H3765V2115H3743L3733 2126V2115H3717Z" fill="#fff" />
        <path d="M3726 2087H3756M3726 2096H3756M3726 2105H3747" stroke="#1d1d1d" strokeWidth={3} />
        <circle cx={3762.5} cy={2122} r={24} fill="#2b2b2b" stroke="#8c8c8c" strokeWidth={2} />
        <path d="M3741 2113C3746 2103 3754 2098 3765 2098V2108C3754 2108 3746 2115 3741 2124Z" fill="#7c7c7c" />
        <text x={3753} y={2132} fontSize={34} fontWeight={600} fill="#fff" textLength={19} lengthAdjust="spacingAndGlyphs">3</text>
        <rect x={3827} y={2040} width={2} height={120} fill="#6a6a6a" />
      </Ico>
    </div>
  );
}

export default function App() {
  return (
    <div className="flex h-[2160px] w-[3840px] flex-col overflow-hidden bg-[#f3f2f1] font-['Open_Sans',sans-serif]">
      <TitleBar />
      <Tabs />
      <div className="flex h-[276px] shrink-0 items-start text-[#444]">
        <Clipboard />
        <Sep />
        <FontGroup />
        <Sep />
        <Paragraph />
        <Sep />
        <Styles />
        <Sep />
        <Editing />
        <Sep />
        <Dictate />
        <Sep />
        <Sensitivity />
        <Sep />
        <Ico x={3760} y={204} w={80} h={276}>
          <path d="M3787 467L3800 454L3813 467" stroke={INK} strokeWidth={3.5} />
        </Ico>
      </div>
      <Page />
      <StatusBar />
      <Taskbar />
    </div>
  );
}
